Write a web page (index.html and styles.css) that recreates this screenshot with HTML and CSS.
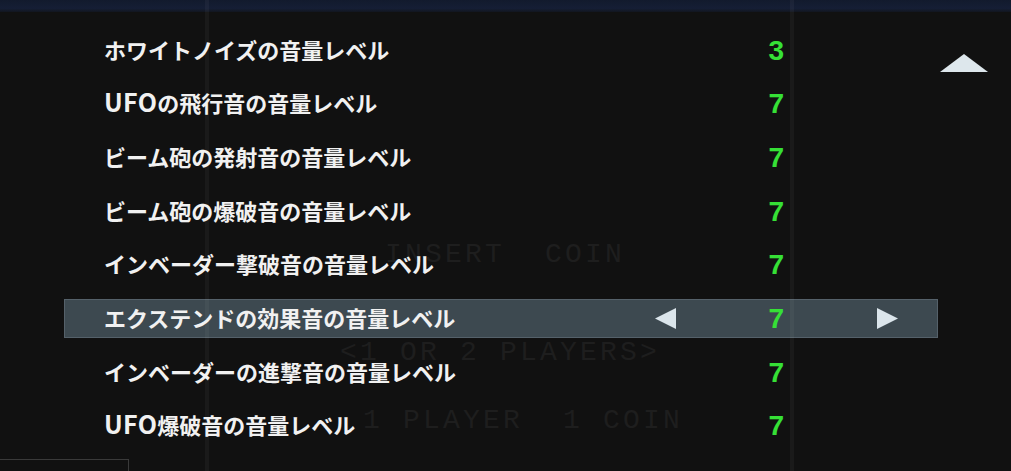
FILE: index.html
```html
<!DOCTYPE html>
<html lang="ja">
<head>
<meta charset="utf-8">
<title>サウンド設定</title>
<link rel="stylesheet" href="styles.css">
</head>
<body>
<div class="screen">
  <div class="topband"></div>

  <div class="attract" aria-hidden="true">
    <div class="attract-line a1">INSERT  COIN</div>
    <div class="attract-line a2">&lt;1 OR 2 PLAYERS&gt;</div>
    <div class="attract-line a3">1 PLAYER  1 COIN</div>
  </div>

  <div class="menu">
    <div class="row"><span class="label">ホワイトノイズの音量レベル</span><span class="arrow"></span><span class="value">3</span><span class="gap"></span><span class="arrow"></span></div>
    <div class="row"><span class="label"><span class="latin">UFO</span>の飛行音の音量レベル</span><span class="arrow"></span><span class="value">7</span><span class="gap"></span><span class="arrow"></span></div>
    <div class="row"><span class="label">ビーム砲の発射音の音量レベル</span><span class="arrow"></span><span class="value">7</span><span class="gap"></span><span class="arrow"></span></div>
    <div class="row"><span class="label">ビーム砲の爆破音の音量レベル</span><span class="arrow"></span><span class="value">7</span><span class="gap"></span><span class="arrow"></span></div>
    <div class="row"><span class="label">インベーダー撃破音の音量レベル</span><span class="arrow"></span><span class="value">7</span><span class="gap"></span><span class="arrow"></span></div>
    <div class="row selected"><span class="label">エクステンドの効果音の音量レベル</span><span class="arrow"><svg viewBox="0 0 21 21" width="21" height="21"><polygon points="21,0 21,21 0,10.5" /></svg></span><span class="value">7</span><span class="gap"></span><span class="arrow"><svg viewBox="0 0 21 21" width="21" height="21"><polygon points="0,0 0,21 21,10.5" /></svg></span></div>
    <div class="row"><span class="label">インベーダーの進撃音の音量レベル</span><span class="arrow"></span><span class="value">7</span><span class="gap"></span><span class="arrow"></span></div>
    <div class="row"><span class="label"><span class="latin">UFO</span>爆破音の音量レベル</span><span class="arrow"></span><span class="value">7</span><span class="gap"></span><span class="arrow"></span></div>
  </div>

  <div class="scroll-up"><svg viewBox="0 0 48 18" width="48" height="18"><polygon points="0,18 48,18 24,0" /></svg></div>
  <div class="frame-box"></div>
  <div class="vline v1"></div>
  <div class="vline v2"></div>
</div>
</body>
</html>
```

FILE: styles.css
```css
html, body {
  margin: 0;
  padding: 0;
  background: #111111;
}

.screen {
  position: relative;
  width: 1011px;
  height: 471px;
  overflow: hidden;
  background: #111111;
  font-family: "Noto Sans CJK JP", "Noto Sans", sans-serif;
}

.topband {
  height: 12px;
  background: linear-gradient(to bottom, #121a2d 0%, #151e35 70%, #12161f 100%);
}

.attract {
  position: absolute;
  inset: 0;
  pointer-events: none;
}

.attract-line {
  position: absolute;
  font-family: "Liberation Mono", "DejaVu Sans Mono", monospace;
  font-weight: 400;
  font-size: 28px;
  letter-spacing: 3.2px;
  line-height: 22px;
  white-space: pre;
  color: #1e1e1e;
}

.a1 { left: 385px; top: 244px; }
.a2 { left: 340px; top: 342px; }
.a3 { left: 363px; top: 410px; }

.menu {
  position: relative;
  display: flex;
  flex-direction: column;
  gap: 14.7px;
  width: 874px;
  margin-left: 64px;
  padding-top: 18.5px;
}

.row {
  display: grid;
  grid-template-columns: 590px 21px 108px 93px 21px 41px;
  align-items: center;
  height: 39px;
  box-sizing: border-box;
  border: 1px solid transparent;
}

.row.selected {
  background: #3d4950;
  border-color: #55616a;
}

.label {
  padding-left: 39px;
  font-size: 22px;
  font-weight: 700;
  color: #f1f1f1;
  line-height: 39px;
  white-space: nowrap;
  margin-top: -2px;
}

.latin {
  font-size: 25px;
  line-height: 0;
  letter-spacing: 0.3px;
}

.value {
  text-align: right;
  font-family: "Liberation Sans", Arial, sans-serif;
  font-weight: 700;
  font-size: 28px;
  line-height: 37px;
  color: #36e036;
}

.arrow {
  display: flex;
  align-items: center;
  height: 21px;
}

.arrow svg {
  display: block;
  fill: #dbe5eb;
}

.scroll-up {
  position: absolute;
  left: 940px;
  top: 54px;
  width: 48px;
  height: 18px;
}

.scroll-up svg {
  display: block;
  fill: #dde7ec;
}

.frame-box {
  position: absolute;
  left: -2px;
  top: 459px;
  width: 129px;
  height: 40px;
  border: 1px solid #3a3a3a;
}

.vline {
  position: absolute;
  top: 0;
  bottom: 0;
  width: 4px;
  background: rgba(255, 255, 255, 0.04);
  pointer-events: none;
}

.v1 { left: 205px; }
.v2 { left: 790px; }
```
